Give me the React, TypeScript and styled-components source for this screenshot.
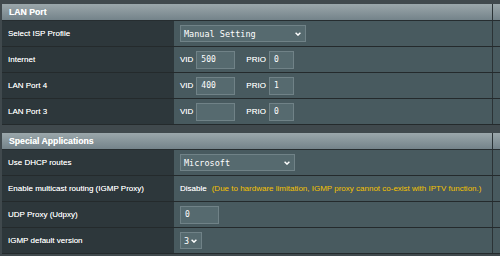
import React from "react";
import styled, { createGlobalStyle } from "styled-components";

const GlobalStyle = createGlobalStyle`
  html, body {
    margin: 0;
    padding: 0;
  }
  body {
    background: #40494d;
    color: #ffffff;
    font-family: "Liberation Sans", Arial, sans-serif;
    overflow: hidden;
  }
`;

const Page = styled.div`
  display: flex;
  flex-direction: column;
  gap: 8px;
  padding: 4px 0 0 2px;
`;

const Table = styled.section`
  display: flex;
  flex-direction: column;
`;

const Header = styled.div`
  display: grid;
  grid-template-columns: 1fr 8px;
  height: 16px;
  border-bottom: 1px solid #262d30;
  background: linear-gradient(#9ba7ab, #74838a);
`;

const HeaderTitle = styled.h2`
  margin: 0;
  padding-left: 7px;
  font-size: 8.7px;
  font-weight: bold;
  line-height: 16px;
  color: #ffffff;
  text-shadow: 0 0 0.6px rgba(255, 255, 255, 0.6);
`;

const Edge = styled.div`
  border-left: 1px solid #2b3336;
`;

const Row = styled.div`
  display: grid;
  grid-template-columns: 172px 1fr 8px;
  height: 25px;
  border-bottom: 1px solid #242a2c;
  background: #485a5f;
`;

const Label = styled.div`
  display: flex;
  align-items: center;
  padding-left: 6px;
  background: #2d373b;
  font-size: 8px;
  text-shadow: 0 0 0.6px rgba(255, 255, 255, 0.6);
`;

const Value = styled.div`
  display: flex;
  align-items: center;
  padding-left: 6px;
  font-size: 8px;
  text-shadow: 0 0 0.6px rgba(255, 255, 255, 0.5);
`;

const FieldName = styled.span<{ $gap?: number }>`
  margin-left: ${(p) => p.$gap ?? 0}px;
  margin-right: 3px;
`;

const Input = styled.div<{ $width: number }>`
  box-sizing: border-box;
  width: ${(p) => p.$width}px;
  height: 18px;
  padding-left: 4px;
  display: flex;
  align-items: center;
  background: #566a6f;
  border: 1px solid #708287;
  font-family: "DejaVu Sans Mono", "Liberation Mono", monospace;
  font-size: 8px;
  text-shadow: none;
`;

const Select = styled.div<{ $width: number }>`
  box-sizing: border-box;
  width: ${(p) => p.$width}px;
  height: 17px;
  padding: 0 4px 0 3px;
  display: flex;
  align-items: center;
  justify-content: space-between;
  background: #566a6f;
  border: 1px solid #708287;
  font-family: "DejaVu Sans Mono", "Liberation Mono", monospace;
  font-size: 8.5px;
  text-shadow: none;
`;

const Note = styled.span`
  margin-left: 5px;
  color: #f5c200;
  text-shadow: none;
`;

const Chevron = () => (
  <svg width="6" height="4" viewBox="0 0 6 4">
    <path d="M0.6 0.7 L3 3.1 L5.4 0.7" fill="none" stroke="#ffffff" strokeWidth="1.4" />
  </svg>
);

const VlanRow = ({ name, vid, prio }: { name: string; vid: string; prio: string }) => (
  <Row>
    <Label>{name}</Label>
    <Value>
      <FieldName>VID</FieldName>
      <Input $width={39}>{vid}</Input>
      <FieldName $gap={11}>PRIO</FieldName>
      <Input $width={25}>{prio}</Input>
    </Value>
    <Edge />
  </Row>
);

export default function App() {
  return (
    <>
      <GlobalStyle />
      <Page>
        <Table>
          <Header>
            <HeaderTitle>LAN Port</HeaderTitle>
            <Edge />
          </Header>
          <Row>
            <Label>Select ISP Profile</Label>
            <Value>
              <Select $width={126}>
                Manual Setting
                <Chevron />
              </Select>
            </Value>
            <Edge />
          </Row>
          <VlanRow name="Internet" vid="500" prio="0" />
          <VlanRow name="LAN Port 4" vid="400" prio="1" />
          <VlanRow name="LAN Port 3" vid="" prio="0" />
        </Table>

        <Table>
          <Header>
            <HeaderTitle>Special Applications</HeaderTitle>
            <Edge />
          </Header>
          <Row>
            <Label>Use DHCP routes</Label>
            <Value>
              <Select $width={115}>
                Microsoft
                <Chevron />
              </Select>
            </Value>
            <Edge />
          </Row>
          <Row>
            <Label>Enable multicast routing (IGMP Proxy)</Label>
            <Value>
              Disable
              <Note>(Due to hardware limitation, IGMP proxy cannot co-exist with IPTV function.)</Note>
            </Value>
            <Edge />
          </Row>
          <Row>
            <Label>UDP Proxy (Udpxy)</Label>
            <Value>
              <Input $width={39}>0</Input>
            </Value>
            <Edge />
          </Row>
          <Row>
            <Label>IGMP default version</Label>
            <Value>
              <Select $width={22}>
                3
                <Chevron />
              </Select>
            </Value>
            <Edge />
          </Row>
        </Table>
      </Page>
    </>
  );
}
